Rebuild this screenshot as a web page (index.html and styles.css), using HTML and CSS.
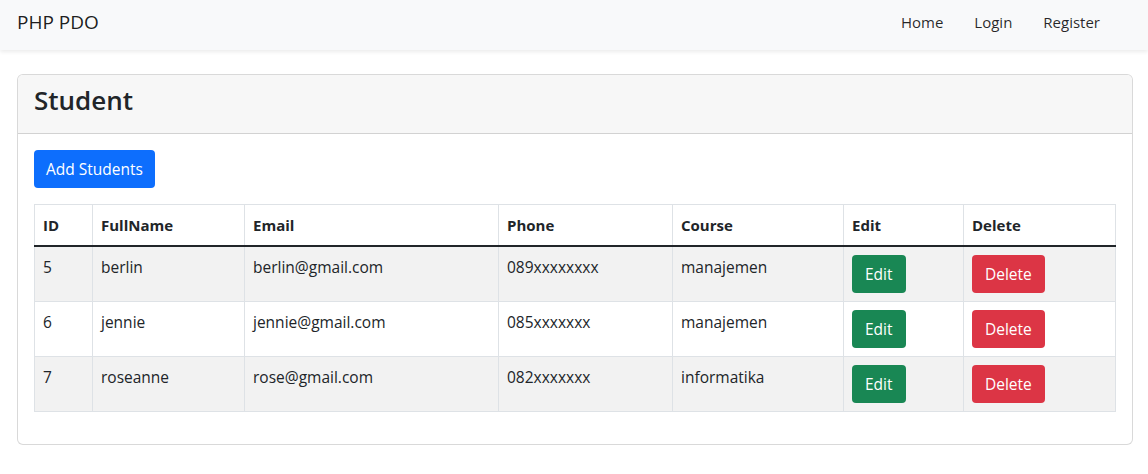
FILE: index.html
```html
<!DOCTYPE html>
<html lang="en">
<head>
<meta charset="utf-8">
<title>PHP PDO</title>
<link rel="stylesheet" href="styles.css">
</head>
<body>
<nav class="navbar">
  <a class="brand" href="#">PHP PDO</a>
  <ul class="nav">
    <li><a href="#">Home</a></li>
    <li><a href="#">Login</a></li>
    <li><a href="#">Register</a></li>
  </ul>
</nav>
<main class="page">
  <section class="card">
    <header class="card-header"><h3>Student</h3></header>
    <div class="card-body">
      <a class="btn btn-primary" href="#">Add Students</a>
      <table class="table">
        <colgroup>
          <col class="c-id"><col class="c-name"><col class="c-email"><col class="c-phone"><col class="c-course"><col class="c-edit"><col class="c-del">
        </colgroup>
        <thead>
          <tr><th>ID</th><th>FullName</th><th>Email</th><th>Phone</th><th>Course</th><th>Edit</th><th>Delete</th></tr>
        </thead>
        <tbody>
          <tr><td>5</td><td>berlin</td><td>berlin@gmail.com</td><td>089xxxxxxxx</td><td>manajemen</td><td><a class="btn btn-success" href="#">Edit</a></td><td><a class="btn btn-danger" href="#">Delete</a></td></tr>
          <tr><td>6</td><td>jennie</td><td>jennie@gmail.com</td><td>085xxxxxxx</td><td>manajemen</td><td><a class="btn btn-success" href="#">Edit</a></td><td><a class="btn btn-danger" href="#">Delete</a></td></tr>
          <tr><td>7</td><td>roseanne</td><td>rose@gmail.com</td><td>082xxxxxxx</td><td>informatika</td><td><a class="btn btn-success" href="#">Edit</a></td><td><a class="btn btn-danger" href="#">Delete</a></td></tr>
        </tbody>
      </table>
    </div>
  </section>
</main>
</body>
</html>
```
FILE: styles.css
```css
* { box-sizing: border-box; }
body {
  margin: 0;
  font-family: "Open Sans", "Noto Sans", sans-serif;
  font-size: 15.5px;
  line-height: 24px;
  color: #212529;
  background: #fff;
}
a { text-decoration: none; }
.navbar {
  height: 50px;
  background: #f8f9fa;
  box-shadow: 0 2px 4px rgba(0,0,0,0.08);
  display: flex;
  align-items: center;
  justify-content: space-between;
  padding: 0 40px 0 17px;
}
.brand {
  font-size: 19px;
  color: rgba(0,0,0,0.9);
  line-height: 30px;
  margin-top: -6px;
}
.nav {
  list-style: none;
  margin: -7px 0 0;
  padding: 0;
  display: flex;
}
.nav a {
  display: block;
  padding: 8px;
  margin-left: 15px;
  color: rgba(0,0,0,0.85);
  font-size: 15px;
}
.page {
  padding: 24px 15px 0 17px;
}
.card {
  border: 1px solid rgba(0,0,0,0.15);
  border-radius: 6px;
  background: #fff;
}
.card-header {
  background: #f7f7f7;
  border-bottom: 1px solid rgba(0,0,0,0.15);
  padding: 8px 16px;
  border-radius: 5px 5px 0 0;
}
.card-header h3 {
  margin: 0 0 8px;
  font-size: 26px;
  line-height: 34px;
  font-weight: 600;
}
.card-body {
  padding: 16px;
}
.btn {
  display: inline-block;
  padding: 7px 12px;
  font-size: 15.5px;
  line-height: 24px;
  border-radius: 4px;
  color: #fff;
}
.btn-primary { background: #0d6efd; }
.btn-success { background: #198754; padding: 7px 13px; }
.btn-danger { background: #dc3545; padding: 7px 13px; }
.table {
  width: 100%;
  margin: 16px 0 16px;
  border-collapse: collapse;
  table-layout: fixed;
}
.c-id { width: 58px; }
.c-name { width: 152px; }
.c-email { width: 254px; }
.c-phone { width: 174px; }
.c-course { width: 171px; }
.c-edit { width: 120px; }
.c-del { width: auto; }
.table th, .table td {
  border: 1px solid #dee2e6;
  padding: 8px 8px;
  text-align: left;
  vertical-align: top;
}
.table th {
  font-weight: 700;
  font-size: 15px;
  padding: 8px 8px 8px;
}
.table thead th { border-bottom: 2px solid #212529; }
.table td { height: 55px; }
.table tbody tr:nth-child(odd) td { background: #f2f2f2; }
```
